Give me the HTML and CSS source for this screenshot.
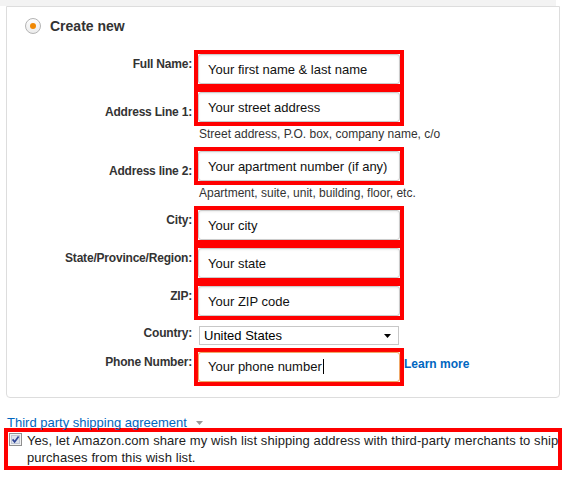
FILE: index.html
```html
<!DOCTYPE html>
<html lang="en">
<head>
    <meta charset="UTF-8">
    <meta name="viewport" content="width=device-width, initial-scale=1.0">
    <title>Shipping address</title>
    <link rel="stylesheet" href="styles.css">
</head>
<body>
    <div class="top-band"></div>
    <div class="panel">
        <div class="choice">
            <span class="radio"><span class="radio-dot"></span></span>
            <span class="choice-label">Create new</span>
        </div>
        <form class="address-form">
            <div class="row">
                <label class="label" for="fullName">Full Name:</label>
                <div class="field">
                    <div class="mark"><input class="input" id="fullName" value="Your first name &amp; last name"></div>
                </div>
            </div>
            <div class="row">
                <label class="label label-low" for="line1">Address Line 1:</label>
                <div class="field">
                    <div class="mark"><input class="input" id="line1" value="Your street address"></div>
                    <div class="help">Street address, P.O. box, company name, c/o</div>
                </div>
            </div>
            <div class="row">
                <label class="label label-low" for="line2">Address line 2:</label>
                <div class="field">
                    <div class="mark"><input class="input" id="line2" value="Your apartment number (if any)"></div>
                    <div class="help">Apartment, suite, unit, building, floor, etc.</div>
                </div>
            </div>
            <div class="row">
                <label class="label" for="city">City:</label>
                <div class="field">
                    <div class="mark"><input class="input" id="city" value="Your city"></div>
                </div>
            </div>
            <div class="row">
                <label class="label" for="state">State/Province/Region:</label>
                <div class="field">
                    <div class="mark"><input class="input" id="state" value="Your state"></div>
                </div>
            </div>
            <div class="row">
                <label class="label" for="zip">ZIP:</label>
                <div class="field">
                    <div class="mark"><input class="input" id="zip" value="Your ZIP code"></div>
                </div>
            </div>
            <div class="row row-country">
                <label class="label label-top">Country:</label>
                <div class="field">
                    <div class="select">
                        <span>United States</span>
                        <svg class="select-arrow" width="7" height="4" viewBox="0 0 7 4"><polygon points="0,0 7,0 3.5,4" fill="#000"/></svg>
                    </div>
                </div>
            </div>
            <div class="row row-phone">
                <label class="label">Phone Number:</label>
                <div class="field field-inline">
                    <div class="mark"><div class="input input-focus">Your phone number<span class="caret"></span></div></div>
                    <a class="learn-more" href="#">Learn more</a>
                </div>
            </div>
        </form>
    </div>

    <div class="agreement">
        <a class="agreement-link" href="#">Third party shipping agreement</a>
        <svg class="agreement-arrow" width="7" height="4" viewBox="0 0 7 4"><polygon points="0,0 7,0 3.5,4" fill="#999"/></svg>
    </div>
    <div class="consent">
        <svg class="checkbox" width="13" height="13" viewBox="0 0 13 13">
            <rect x="0.5" y="0.5" width="12" height="12" fill="#f2f2f2" stroke="#8f8f8f"/>
            <rect x="2.5" y="2.5" width="8" height="8" fill="#dde2ec" stroke="#bfc6d4"/>
            <path d="M3.6 6.4 L5.6 8.9 L9.6 3.4" fill="none" stroke="#2f4596" stroke-width="1.7"/>
        </svg>
        <span class="consent-text">Yes, let Amazon.com share my wish list shipping address with third-party merchants to ship<br>purchases from this wish list.</span>
    </div>
</body>
</html>
```

FILE: styles.css
```css
body {
    margin: 0;
    font-family: "Liberation Sans", Arial, sans-serif;
    color: #333;
    background-color: white;
}
.top-band {
    width: 556px;
    height: 6px;
    background-color: #f3f3f3;
}
.panel {
    box-sizing: border-box;
    width: 554px;
    margin-left: 6px;
    padding: 11px 0 11px 0;
    border: 1px solid #ddd;
    border-radius: 0 0 4px 4px;
}
.choice {
    display: flex;
    align-items: center;
    padding-left: 18px;
    height: 16px;
}
.radio {
    box-sizing: border-box;
    width: 16px;
    height: 16px;
    border: 1px solid #b4b4b4;
    border-radius: 50%;
    background: linear-gradient(#fdfdfd, #ececec);
    display: flex;
    align-items: center;
    justify-content: center;
}
.radio-dot {
    width: 6px;
    height: 6px;
    border-radius: 50%;
    background-color: #f08804;
}
.choice-label {
    margin-left: 9px;
    font-size: 14px;
    font-weight: bold;
    color: #333;
}
.address-form {
    margin-top: 16px;
}
.row {
    display: flex;
    column-gap: 2px;
}
.label {
    width: 185px;
    flex: none;
    text-align: right;
    font-size: 12px;
    line-height: 14px;
    font-weight: bold;
    letter-spacing: -0.2px;
    color: #333;
    padding-top: 7px;
}
.label-low {
    padding-top: 17px;
}
.label-top {
    padding-top: 0;
}
.field {
    display: flex;
    flex-direction: column;
    align-items: flex-start;
}
.field-inline {
    flex-direction: row;
}
.mark {
    box-sizing: border-box;
    width: 210px;
    border: 4px solid #f00;
}
.input {
    display: block;
    box-sizing: border-box;
    width: 100%;
    height: 30px;
    margin: 0;
    padding: 0 9px;
    border: 1px solid #cbcbcb;
    border-radius: 3px;
    box-shadow: inset 0 1px 2px rgba(0,0,0,0.08);
    font-family: "Liberation Sans", Arial, sans-serif;
    font-size: 13px;
    line-height: 28px;
    color: #111;
    background-color: white;
}
.input-focus {
    border-color: #f0a868;
    box-shadow: 0 0 2px rgba(228,121,17,0.4);
}
.caret {
    display: inline-block;
    width: 1px;
    height: 15px;
    margin-left: 1px;
    vertical-align: -3px;
    background-color: #000;
}
.help {
    margin: 1px 0 6px 5px;
    font-size: 12px;
    line-height: 14px;
    color: #333;
}
.row-country {
    margin-top: 6px;
}
.select {
    box-sizing: border-box;
    width: 200px;
    height: 19px;
    margin-left: 5px;
    padding: 0 4px 0 4px;
    border: 1px solid #c7c7c7;
    display: flex;
    align-items: center;
    justify-content: space-between;
    font-size: 13px;
    color: #000;
}
.select-arrow {
    margin-right: 3px;
}
.row-phone {
    margin-top: 3px;
}
.learn-more {
    padding-top: 9px;
    font-size: 12px;
    line-height: 14px;
    font-weight: bold;
    color: #0066c0;
    text-decoration: none;
}
.agreement {
    display: flex;
    align-items: center;
    margin: 18px 0 0 7px;
    height: 13px;
}
.agreement-link {
    font-size: 13px;
    line-height: 13px;
    color: #0066c0;
    text-decoration: none;
}
.agreement-arrow {
    margin-left: 9px;
}
.consent {
    box-sizing: border-box;
    display: flex;
    align-items: flex-start;
    width: 558px;
    margin: -1px 0 0 4px;
    border: 4px solid #f00;
    height: 42px;
}
.checkbox {
    flex: none;
    margin: 1px 5px 0 1px;
}
.consent-text {
    font-size: 13px;
    line-height: 17px;
    letter-spacing: 0.08px;
    color: #222;
    white-space: nowrap;
}
```
